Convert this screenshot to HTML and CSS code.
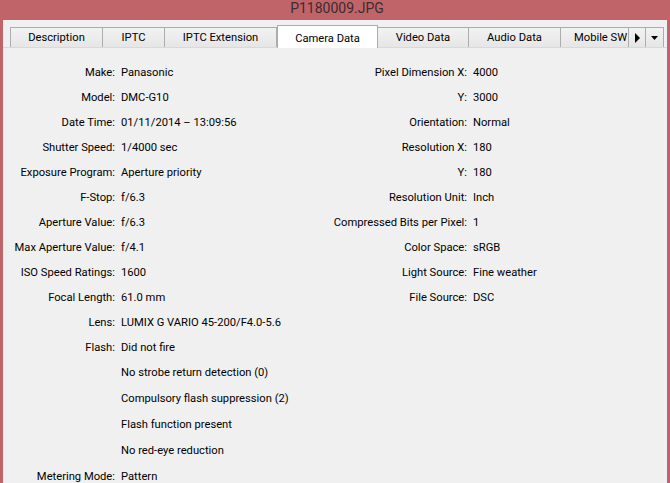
FILE: index.html
```html
<!DOCTYPE html>
<html>
<head>
<meta charset="utf-8">
<link rel="stylesheet" href="styles.css">
</head>
<body>
<div class="window">
  <div class="titlebar">P1180009.JPG</div>
  <div class="panel">
    <div class="tabbar">
      <div class="tab t-desc">Description</div>
      <div class="tab t-iptc">IPTC</div>
      <div class="tab t-ext">IPTC Extension</div>
      <div class="tab active t-cam">Camera Data</div>
      <div class="tab t-vid">Video Data</div>
      <div class="tab t-aud">Audio Data</div>
      <div class="tab t-mob">Mobile SW</div>
      <div class="tabbtn"><svg width="7" height="10" viewBox="0 0 7 10"><path d="M1 0 L6 5 L1 10 Z" fill="#000"/></svg></div>
      <div class="tabbtn"><svg width="7" height="4" viewBox="0 0 7 4"><path d="M0 0 L7 0 L3.5 4 Z" fill="#000"/></svg></div>
    </div>
    <div class="content">
      <div class="col left">
        <div class="row"><span class="lbl">Make:</span><span class="val">Panasonic</span></div>
        <div class="row"><span class="lbl">Model:</span><span class="val">DMC-G10</span></div>
        <div class="row"><span class="lbl">Date Time:</span><span class="val">01/11/2014 – 13:09:56</span></div>
        <div class="row"><span class="lbl">Shutter Speed:</span><span class="val">1/4000 sec</span></div>
        <div class="row"><span class="lbl">Exposure Program:</span><span class="val">Aperture priority</span></div>
        <div class="row"><span class="lbl">F-Stop:</span><span class="val">f/6.3</span></div>
        <div class="row"><span class="lbl">Aperture Value:</span><span class="val">f/6.3</span></div>
        <div class="row"><span class="lbl">Max Aperture Value:</span><span class="val">f/4.1</span></div>
        <div class="row"><span class="lbl">ISO Speed Ratings:</span><span class="val">1600</span></div>
        <div class="row"><span class="lbl">Focal Length:</span><span class="val">61.0 mm</span></div>
        <div class="row"><span class="lbl">Lens:</span><span class="val">LUMIX G VARIO 45-200/F4.0-5.6</span></div>
        <div class="row"><span class="lbl">Flash:</span><span class="val">Did not fire</span></div>
        <div class="row tall"><span class="lbl"></span><span class="val">No strobe return detection (0)</span></div>
        <div class="row tall"><span class="lbl"></span><span class="val">Compulsory flash suppression (2)</span></div>
        <div class="row tall"><span class="lbl"></span><span class="val">Flash function present</span></div>
        <div class="row tall"><span class="lbl"></span><span class="val">No red-eye reduction</span></div>
        <div class="row"><span class="lbl">Metering Mode:</span><span class="val">Pattern</span></div>
      </div>
      <div class="col right">
        <div class="row"><span class="lbl">Pixel Dimension X:</span><span class="val">4000</span></div>
        <div class="row"><span class="lbl">Y:</span><span class="val">3000</span></div>
        <div class="row"><span class="lbl">Orientation:</span><span class="val">Normal</span></div>
        <div class="row"><span class="lbl">Resolution X:</span><span class="val">180</span></div>
        <div class="row"><span class="lbl">Y:</span><span class="val">180</span></div>
        <div class="row"><span class="lbl">Resolution Unit:</span><span class="val">Inch</span></div>
        <div class="row"><span class="lbl">Compressed Bits per Pixel:</span><span class="val">1</span></div>
        <div class="row"><span class="lbl">Color Space:</span><span class="val">sRGB</span></div>
        <div class="row"><span class="lbl">Light Source:</span><span class="val">Fine weather</span></div>
        <div class="row"><span class="lbl">File Source:</span><span class="val">DSC</span></div>
      </div>
    </div>
  </div>
</div>
</body>
</html>
```
FILE: styles.css
```css
html, body {
  margin: 0;
  padding: 0;
  background: #c1646a;
  overflow: hidden;
}
body {
  font-family: "Roboto", "Open Sans", "Liberation Sans", sans-serif;
  font-size: 11.2px;
  color: #000;
}
.window {
  width: 670px;
  height: 483px;
  display: flex;
  flex-direction: column;
  padding: 0 3px;
  box-sizing: border-box;
}
.titlebar {
  height: 20px;
  line-height: 16px;
  text-align: center;
  font-size: 14px;
  color: #3b2c2d;
  padding-left: 4px;
}
.panel {
  flex: 1;
  background: #f0f0f0;
  overflow: hidden;
}
.tabbar {
  height: 28px;
  display: flex;
  align-items: flex-end;
  padding-left: 7px;
  border-bottom: 1px solid #d9d9d9;
  box-sizing: border-box;
}
.tab {
  height: 20px;
  line-height: 20px;
  box-sizing: border-box;
  text-align: center;
  border: 1px solid #acacac;
  border-bottom: none;
  border-left: none;
  background: linear-gradient(#f2f2f2, #e6e6e6);
  white-space: nowrap;
  overflow: hidden;
}
.tab.t-desc { width: 93px; border-left: 1px solid #acacac; }
.tab.t-iptc { width: 62px; }
.tab.t-ext { width: 112px; }
.tab.t-cam { width: 101px; }
.tab.t-vid { width: 91px; border-left: none; }
.tab.t-aud { width: 92px; }
.tab.t-mob { width: 67px; text-align: left; padding-left: 13px; border-right: none; }
.tab.active {
  height: 23px;
  line-height: 25px;
  background: #fff;
  border-left: 1px solid #acacac;
  margin-bottom: -1px;
  position: relative;
}
.tabbtn {
  width: 18px;
  height: 20px;
  box-sizing: border-box;
  border: 1px solid #acacac;
  border-bottom: none;
  background: linear-gradient(#f2f2f2, #e6e6e6);
  display: flex;
  align-items: center;
  justify-content: center;
}
.tabbtn + .tabbtn { border-left: none; }
.content {
  display: flex;
  padding-top: 12px;
}
.col.left { width: 230px; }
.col.right { flex: 1; }
.row {
  display: flex;
  height: 25px;
  line-height: 25px;
  white-space: nowrap;
}
.row.tall { height: 26px; line-height: 26px; }
.lbl {
  text-align: right;
  flex: none;
}
.left .lbl { width: 112px; }
.right .lbl { width: 234px; }
.val { padding-left: 6px; }
```
